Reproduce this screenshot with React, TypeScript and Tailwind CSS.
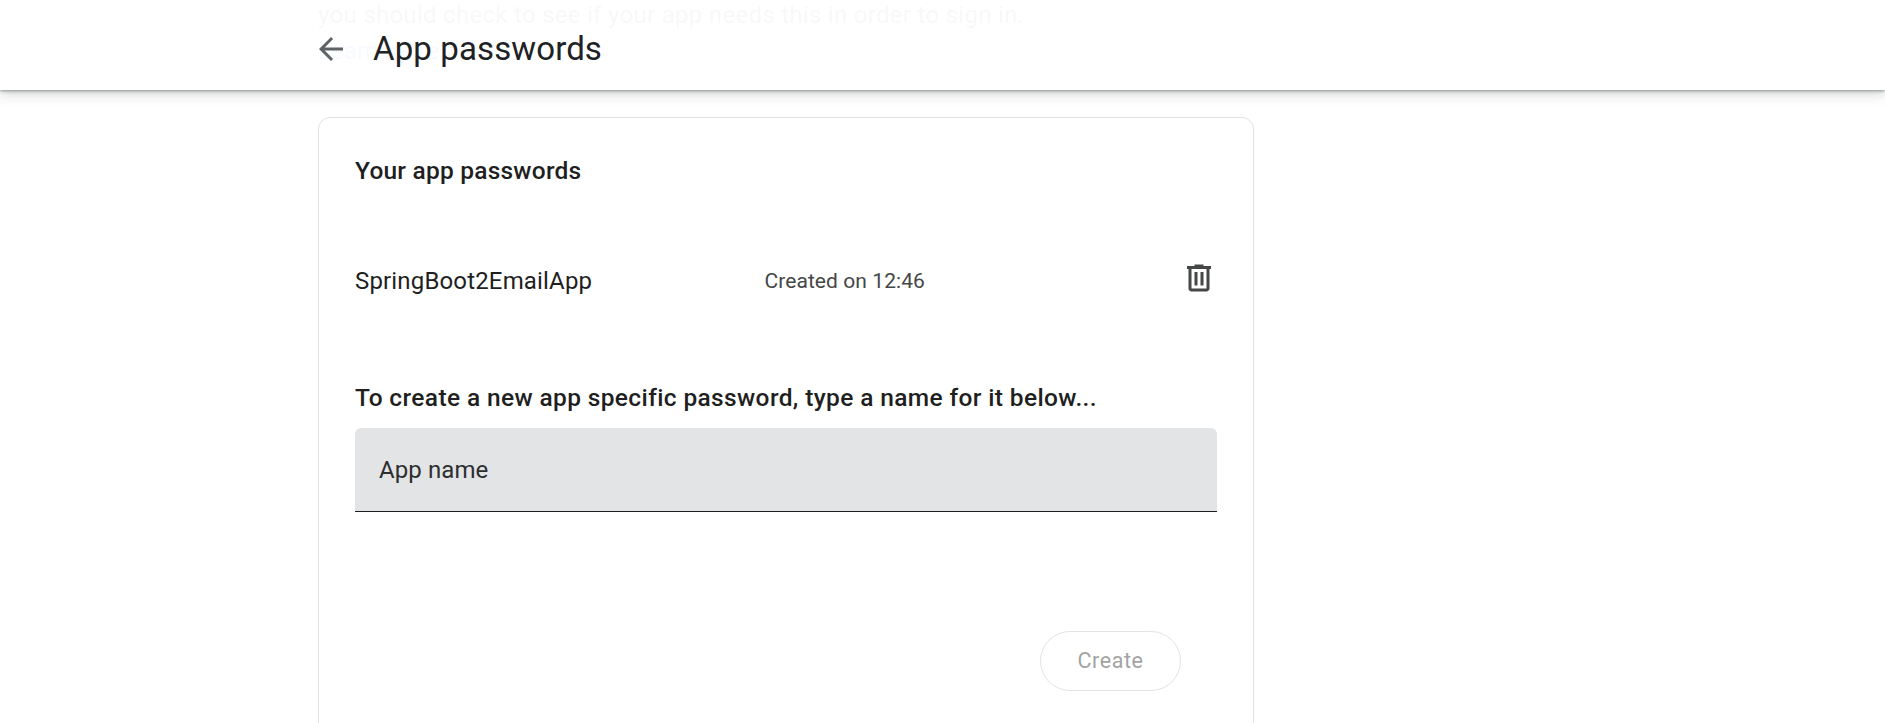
function BackArrow() {
  return (
    <svg className="size-9" viewBox="0 0 24 24" fill="#5f6368" aria-hidden="true">
      <path d="M20 11H7.83l5.59-5.59L12 4l-8 8 8 8 1.41-1.41L7.83 13H20v-2z" />
    </svg>
  );
}

function Trash() {
  return (
    <svg className="size-9" viewBox="0 0 24 24" fill="#444746" aria-hidden="true">
      <path d="M15 4V3H9v1H4v2h1v13c0 1.1.9 2 2 2h10c1.1 0 2-.9 2-2V6h1V4h-5zm2 15H7V6h10v13zM9 8h2v9H9zm4 0h2v9h-2z" />
    </svg>
  );
}

export default function App() {
  return (
    <div className="relative h-[723px] w-full overflow-hidden bg-white font-[Roboto,sans-serif] text-[#1f1f1f]">
      <header className="absolute inset-x-0 top-0 z-10 flex h-[90px] items-center bg-white/97 pt-2 pl-[313px] shadow-[0_1px_3px_rgba(60,64,67,0.5),0_4px_12px_rgba(60,64,67,0.22)]">
        <button className="flex" aria-label="Back">
          <BackArrow />
        </button>
        <h1 className="ml-6 whitespace-nowrap text-[33px] leading-[44px] tracking-[0.12px] text-[#202124]">App passwords</h1>
      </header>

      <main className="-mt-[3px] ml-[318px] w-[936px]">
        <p className="whitespace-nowrap text-2xl leading-9 tracking-[0.29px]">you should check to see if your app needs this in order to sign in.</p>
        <a className="block text-2xl leading-9 text-[#0b57d0]">Learn more</a>

        <section className="mt-12 h-[700px] rounded-xl border border-[#e0e2e3] px-9 pt-[35px]">
          <h2 className="text-[24.5px] leading-9 font-medium tracking-[0.22px]">Your app passwords</h2>

          <div className="mt-[74px] flex h-9 items-center">
            <span className="w-[409.5px] text-2xl leading-9 tracking-[0.16px]">SpringBoot2EmailApp</span>
            <span className="text-[21px] leading-9 tracking-[0.07px] text-[#444746]">Created on 12:46</span>
            <button className="mb-[6px] ml-auto flex" aria-label="Delete">
              <Trash />
            </button>
          </div>

          <h2 className="mt-[81px] whitespace-nowrap text-[24.5px] leading-9 font-medium tracking-[0.37px]">
            To create a new app specific password, type a name for it below...
          </h2>
          <label className="mt-3 flex h-[84px] w-[862px] items-center rounded-t-md border-b border-[#1f1f1f] bg-[#e3e4e6] pl-6 text-2xl tracking-[0.1px] text-[#2d2e30]">
            App name
          </label>

          <div className="mt-[119px] flex justify-end pr-9">
            <button className="h-[60px] w-[141px] rounded-full border border-[#e3e3e3] pt-px text-[21.5px] tracking-[0.6px] text-[#a3a3a3]">Create</button>
          </div>
        </section>
      </main>
    </div>
  );
}
